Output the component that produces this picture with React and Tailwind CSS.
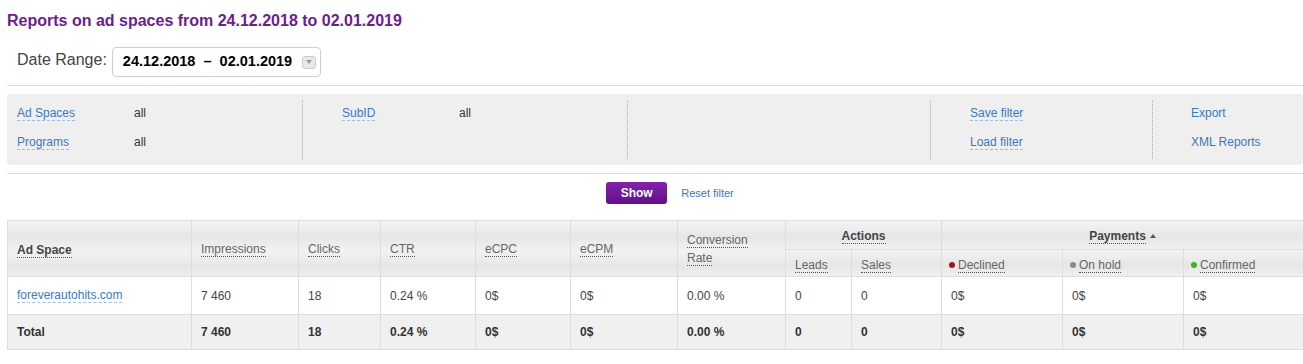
import React from 'react';

const link = 'text-[#3b78c0] border-b border-dashed border-[#9dbbe0] leading-[15px]';

function Th({ children, bold, className = '' }) {
    return (
        <span className={`border-b border-dotted border-[#555] leading-[14px] ${bold ? 'font-bold text-[#444]' : 'text-[#666]'} ${className}`}>
            {children}
        </span>
    );
}

function Dot({ color }) {
    return <span className="inline-block w-[6px] h-[6px] rounded-full mr-[3px] align-[1px]" style={{ background: color }} />;
}

export default function App() {
    const headBg = 'bg-[linear-gradient(#f3f3f3,#e6e6e6_55%,#f1f1f1)]';
    const cell = 'border border-[#dddddd] px-[9px] text-left';

    const row = ['7 460', '18', '0.24 %', '0$', '0$', '0.00 %', '0', '0', '0$', '0$', '0$'];

    return (
        <div className="min-h-screen bg-white font-['Liberation_Sans',Arial,sans-serif] text-[12px] text-[#333] pl-[7px]">
            {/* title */}
            <h1 className="pt-[11px] text-[16px] font-bold text-[#6c1d8e] leading-[19px]">
                Reports on ad spaces from 24.12.2018 to 02.01.2019
            </h1>

            {/* date range */}
            <div className="flex items-center mt-[17px] ml-[10px] h-[30px]">
                <span className="text-[16px] text-[#444] mr-[5px] -mt-[4px]">Date Range:</span>
                <div className="flex items-center h-[30px] w-[209px] border border-[#cfcfcf] rounded-[4px] pl-[10px] bg-white">
                    <span className="text-[14.5px] font-bold text-black">24.12.2018 &nbsp;–&nbsp; 02.01.2019</span>
                    <span className="ml-auto mr-[4px] w-[14px] h-[13px] rounded-[3px] border border-[#ccc] bg-[#e8e8e8] flex items-center justify-center">
                        <span className="block w-0 h-0 border-l-[3px] border-r-[3px] border-t-[4px] border-l-transparent border-r-transparent border-t-[#999]" />
                    </span>
                </div>
            </div>

            <div className="border-t border-[#dcdcdc] mt-[8px]" />

            {/* filter panel */}
            <div className="mt-[8px] bg-[#efefef] rounded-[3px] h-[71px] flex py-[6px]">
                <div className="w-[296px] pl-[10px] pt-[4px] border-r border-dotted border-[#aaa]">
                    <div className="flex h-[29px]"><span className="w-[117px]"><span className={link}>Ad Spaces</span></span><span>all</span></div>
                    <div className="flex h-[29px]"><span className="w-[117px]"><span className={link}>Programs</span></span><span>all</span></div>
                </div>
                <div className="w-[325px] pl-[39px] pt-[4px] border-r border-dotted border-[#aaa]">
                    <div className="flex h-[29px]"><span className="w-[117px]"><span className={link}>SubID</span></span><span>all</span></div>
                </div>
                <div className="w-[303px] border-r border-dotted border-[#aaa]" />
                <div className="w-[222px] pl-[39px] pt-[4px] border-r border-dotted border-[#aaa]">
                    <div className="h-[29px]"><span className={link}>Save filter</span></div>
                    <div className="h-[29px]"><span className={link}>Load filter</span></div>
                </div>
                <div className="flex-1 pl-[38px] pt-[4px] text-[#3b78c0]">
                    <div className="h-[29px]">Export</div>
                    <div className="h-[29px]">XML Reports</div>
                </div>
            </div>

            <div className="border-t border-[#dcdcdc] mt-[8px]" />

            {/* buttons */}
            <div className="flex justify-center items-center gap-[14px] pl-[30px] mt-[8px] h-[22px]">
                <button className="h-[22px] w-[61px] rounded-[3px] bg-[linear-gradient(#8424ab,#620f86)] text-white font-bold text-[12px]">Show</button>
                <span className="text-[#3b78c0] text-[11px]">Reset filter</span>
            </div>

            {/* table */}
            <table className="mt-[16px] border-collapse table-fixed w-[1296px]">
                <colgroup>
                    {[184, 107, 82, 95, 95, 107, 108, 66, 90, 121, 121, 120].map((w, i) => (
                        <col key={i} style={{ width: w }} />
                    ))}
                </colgroup>
                <thead>
                    <tr className={`h-[29px] ${headBg}`}>
                        <th rowSpan={2} className={`${cell} font-normal pt-[2px]`}><Th bold>Ad Space</Th></th>
                        <th rowSpan={2} className={`${cell} font-normal`}><Th>Impressions</Th></th>
                        <th rowSpan={2} className={`${cell} font-normal`}><Th>Clicks</Th></th>
                        <th rowSpan={2} className={`${cell} font-normal`}><Th>CTR</Th></th>
                        <th rowSpan={2} className={`${cell} font-normal`}><Th>eCPC</Th></th>
                        <th rowSpan={2} className={`${cell} font-normal`}><Th>eCPM</Th></th>
                        <th rowSpan={2} className={`${cell} font-normal leading-[18px]`}>
                            <Th>Conversion</Th><br /><Th>Rate</Th>
                        </th>
                        <th colSpan={2} className={`${cell} text-center! font-normal pt-[2px]`}><Th bold>Actions</Th></th>
                        <th colSpan={3} className={`${cell} text-center! font-normal pt-[2px]`}>
                            <Th bold>Payments</Th>
                            <span className="inline-block ml-[4px] align-[2px] w-0 h-0 border-l-[3px] border-r-[3px] border-b-[4px] border-l-transparent border-r-transparent border-b-[#555]" />
                        </th>
                    </tr>
                    <tr className={`h-[27px] ${headBg}`}>
                        <th className={`${cell} font-normal pt-[4px]`}><Th>Leads</Th></th>
                        <th className={`${cell} font-normal pt-[4px]`}><Th>Sales</Th></th>
                        <th className={`${cell} font-normal pt-[4px] pl-[7px]`}><Dot color="#a0161e" /><Th>Declined</Th></th>
                        <th className={`${cell} font-normal pt-[4px] pl-[7px]`}><Dot color="#8a8a8a" /><Th>On hold</Th></th>
                        <th className={`${cell} font-normal pt-[4px] pl-[7px]`}><Dot color="#3fb21c" /><Th>Confirmed</Th></th>
                    </tr>
                </thead>
                <tbody>
                    <tr className="h-[38px] bg-white">
                        <td className={`${cell} pb-[2px]`}><span className={link}>foreverautohits.com</span></td>
                        {row.map((v, i) => (
                            <td key={i} className={`${cell} text-[#444]`}>{v}</td>
                        ))}
                    </tr>
                    <tr className="h-[35px] bg-[#f0f0f0] font-bold">
                        <td className={cell}>Total</td>
                        {row.map((v, i) => (
                            <td key={i} className={cell}>{v}</td>
                        ))}
                    </tr>
                </tbody>
            </table>
        </div>
    );
}
